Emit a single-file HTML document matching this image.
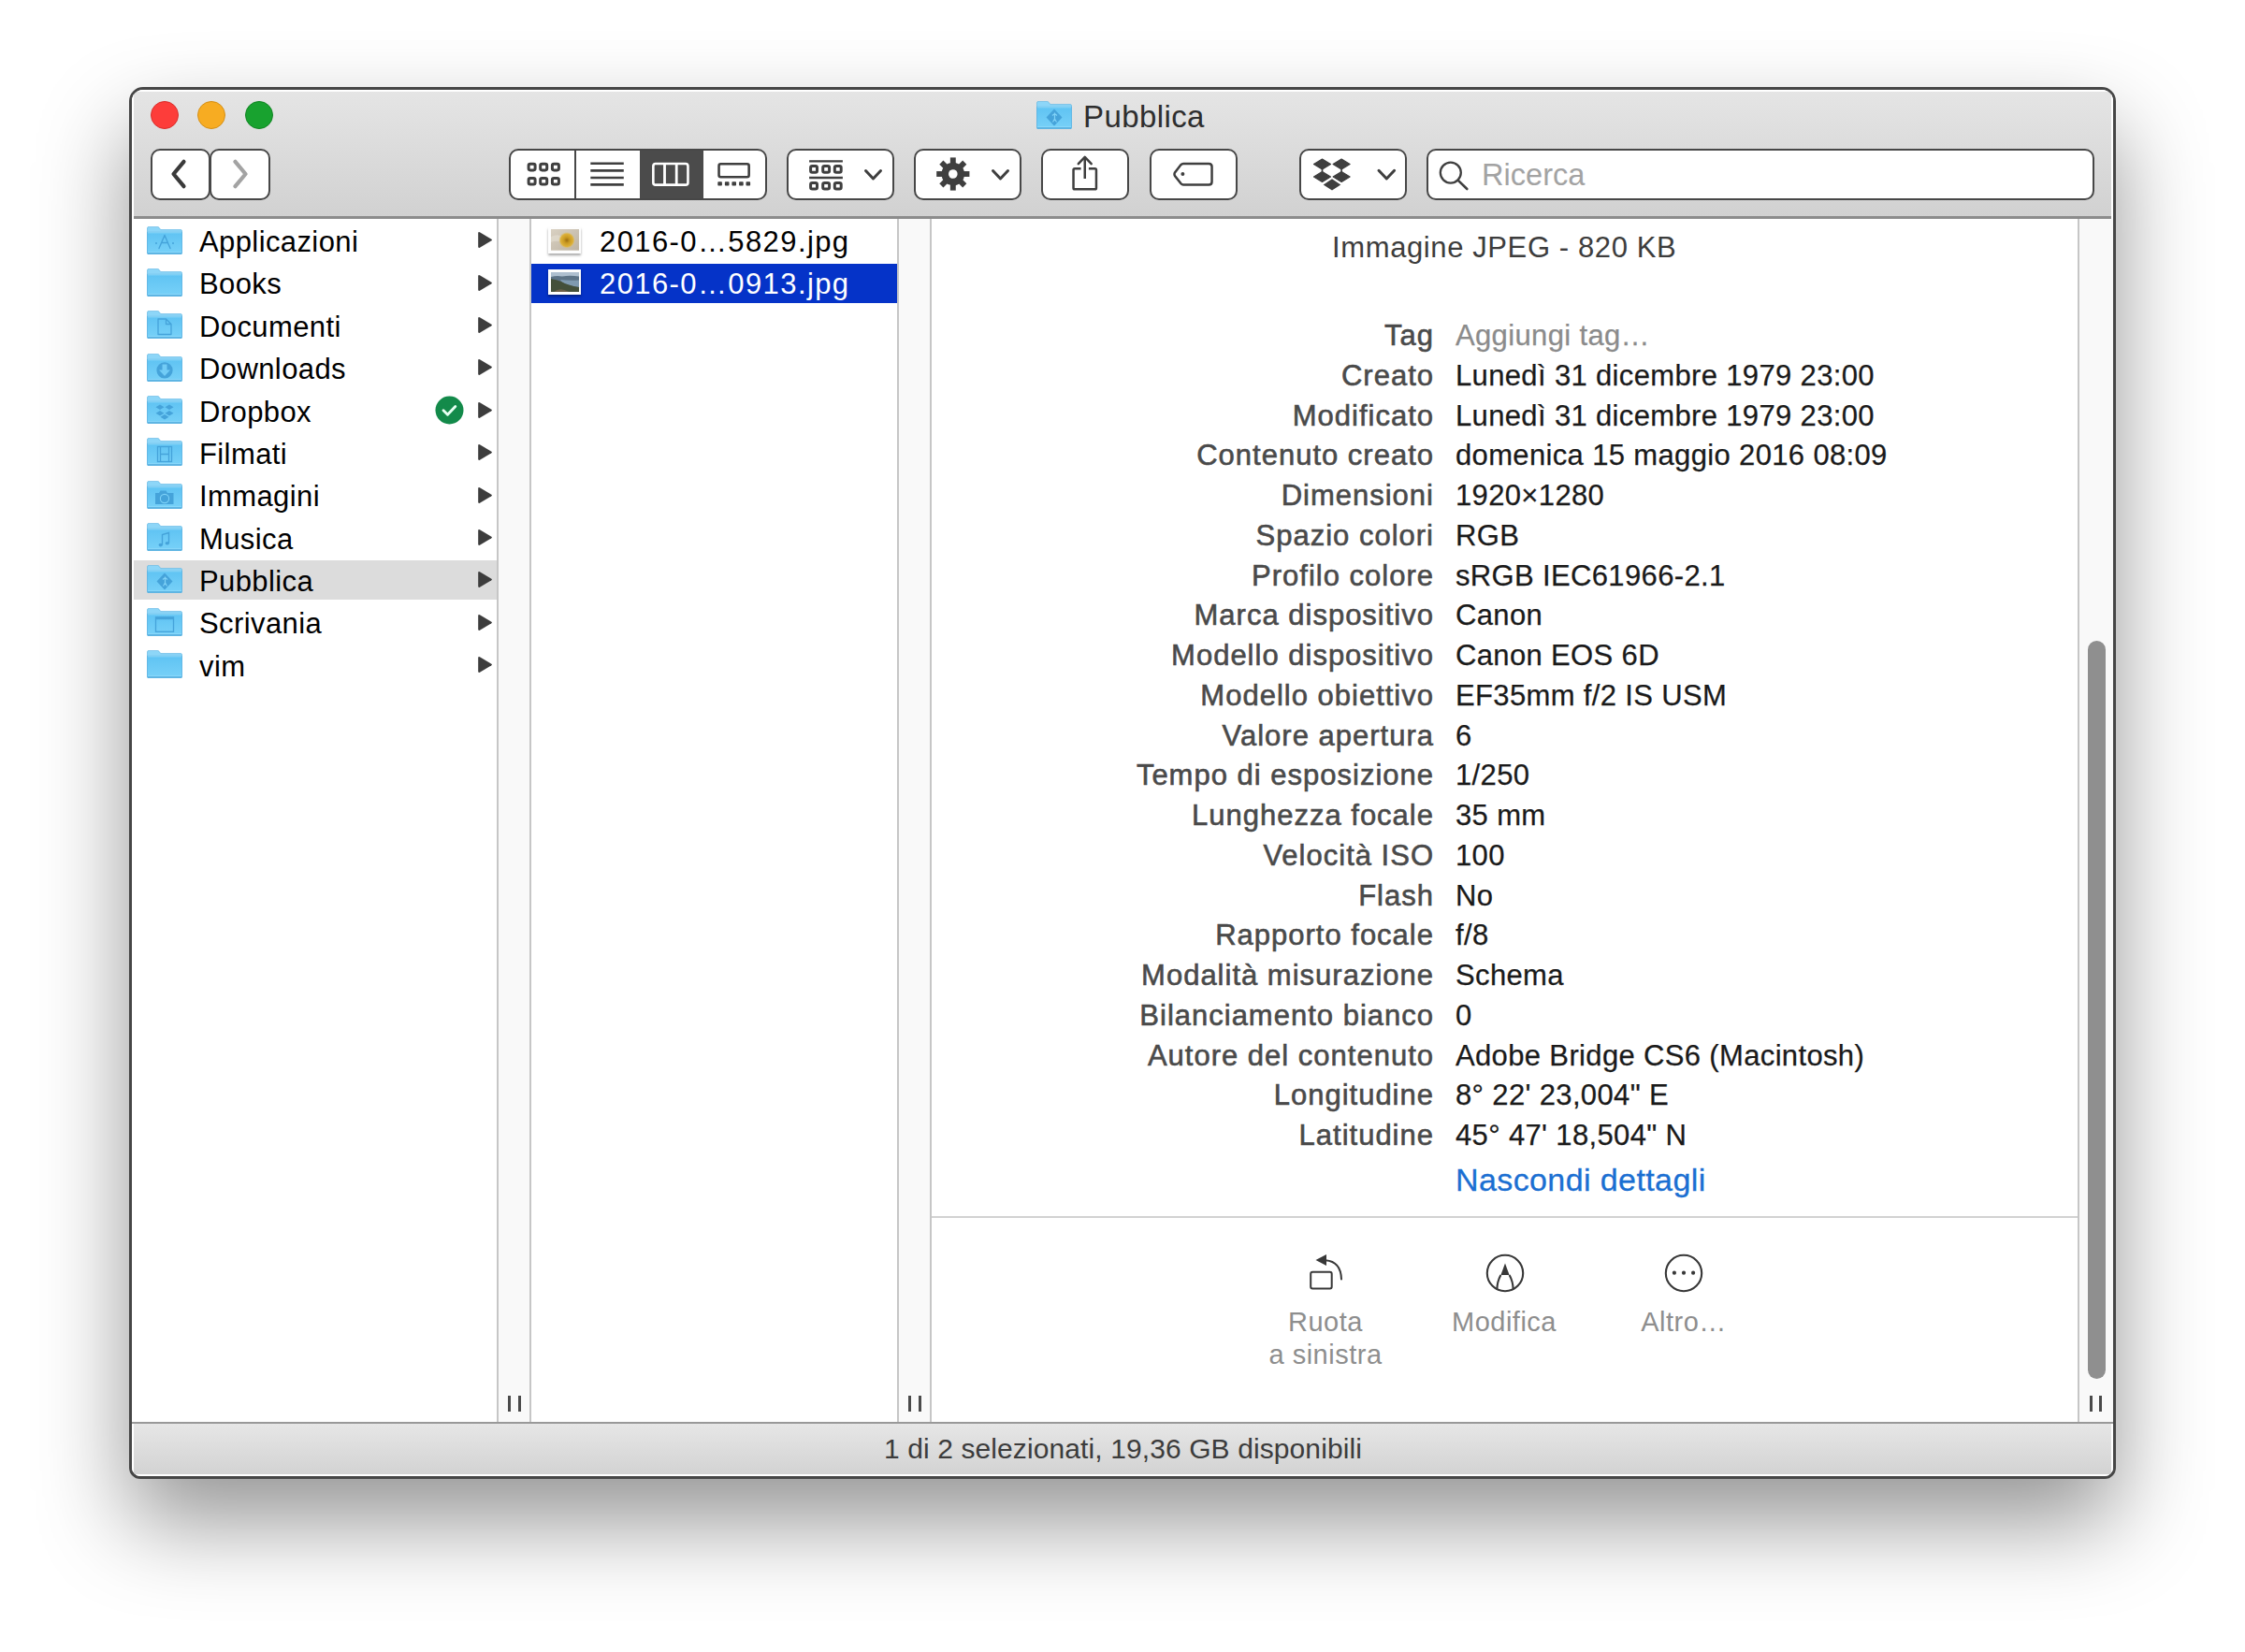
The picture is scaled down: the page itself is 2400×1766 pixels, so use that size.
<!DOCTYPE html>
<html><head><meta charset="utf-8">
<style>
html,body{margin:0;padding:0;width:2400px;height:1766px;background:#fff;overflow:hidden;font-family:"Liberation Sans",sans-serif;}
#win{position:absolute;left:138px;top:93px;width:2124px;height:1488px;box-sizing:border-box;border:3px solid #464646;border-radius:15px 15px 12px 12px;background:#fff;box-shadow:0 46px 96px rgba(0,0,0,.42);overflow:hidden}
#pg{position:absolute;left:-141px;top:-96px;width:2400px;height:1766px}
.a{position:absolute}
.t{position:absolute;white-space:nowrap;line-height:1}
#tb{position:absolute;left:141px;top:96px;width:2118px;height:136px;background:linear-gradient(#e5e5e5,#d1d1d1);box-shadow:inset 2px 2px 0 #fff,inset -2px 0 0 #fff}
#tbline{position:absolute;left:143px;top:231px;width:2114px;height:3px;background:#8c8c8c}
.btn{position:absolute;top:159px;height:55px;box-sizing:border-box;border:2.5px solid #474747;border-radius:10px;background:#fff}
.light{position:absolute;top:108px;width:30px;height:30px;border-radius:50%;box-sizing:border-box}
.strip{position:absolute;top:234px;height:1286px;background:#f9f9f9;box-sizing:border-box;border-left:2px solid #c6c6c6;border-right:2px solid #c6c6c6}
.handle{position:absolute;top:1492px;width:3px;height:17px;background:#4a4a4a}
#sb{position:absolute;left:141px;top:1520px;width:2118px;height:58px;background:linear-gradient(#e6e6e6,#d2d2d2);border-top:2px solid #999;box-sizing:border-box;box-shadow:inset 2px 0 0 #fff,inset -2px 0 0 #fff,inset 0 -2px 0 #fff}
</style></head><body>
<div id="win"><div id="pg">
<div id="tb"></div><div id="tbline"></div>
<div class="light" style="left:161px;background:#fd3d3a;border:1.5px solid #d8302d"></div>
<div class="light" style="left:211px;background:#f7ac22;border:1.5px solid #d48f17"></div>
<div class="light" style="left:262px;background:#18a22f;border:1.5px solid #128524"></div>
<svg class="a" style="left:1108px;top:108px" width="38" height="30" viewBox="0 0 38 30"><defs><linearGradient id="fg1108_108" x1="0" y1="0" x2="0" y2="1"><stop offset="0" stop-color="#5fc3f3"/><stop offset="1" stop-color="#78d1f8"/></linearGradient></defs><path d="M0.5 2 Q0.5 0.4 2.1 0.4 H11.2 Q12.3 0.4 13 1.3 L14.8 3.6 H36.2 Q37.5 3.6 37.5 4.9 V28.3 Q37.5 29.7 36.1 29.7 H1.9 Q0.5 29.7 0.5 28.3 Z" fill="#8dd6f8" stroke="#64b8e4" stroke-width="0.7"/><path d="M0.5 6.3 H37.5 V28.3 Q37.5 29.7 36.1 29.7 H1.9 Q0.5 29.7 0.5 28.3 Z" fill="url(#fg1108_108)" stroke="#5cb2e1" stroke-width="0.7"/><path d="M1 6.8 H37" stroke="#93dbfa" stroke-width="0.9"/><path d="M1 27.6 H37" stroke="#8ad8fa" stroke-width="1"/><path d="M0.9 28.9 H37.1" stroke="#56abdc" stroke-width="1.2"/><path d="M19 8.5 L27.5 17.5 L19 26.5 L10.5 17.5 Z" fill="#45a3da"/><path d="M19.5 12.5 V19 M17 15.5 L19.5 13.5 L22 15.5 M19.5 19 L17.5 22.5 M19.5 19 L21.5 22.5" stroke="#7fd2f7" stroke-width="1.2" fill="none"/></svg>
<div class="t" style="left:1158.0px;top:108.1px;font-size:33px;color:#2e2e2e;letter-spacing:0.4px;">Pubblica</div>
<div class="btn" style="left:161px;width:64px"></div>
<div class="btn" style="left:224px;width:65px"></div>
<svg class="a" style="left:180px;top:168px;" width="24" height="36" viewBox="0 0 24 36"><path d="M16.5 4.8 L5.5 18 L16.5 31.2" fill="none" stroke="#3a3a3a" stroke-width="4.2" stroke-linecap="round" stroke-linejoin="round"/></svg>
<svg class="a" style="left:246px;top:168px;" width="24" height="36" viewBox="0 0 24 36"><path d="M5.5 4.8 L16.5 18 L5.5 31.2" fill="none" stroke="#a3a3a3" stroke-width="4.2" stroke-linecap="round" stroke-linejoin="round"/></svg>
<div class="btn" style="left:544px;width:276px"></div>
<div class="a" style="left:684px;top:161px;width:68px;height:51px;background:#4b4b4b"></div>
<div class="a" style="left:614px;top:161px;width:2px;height:51px;background:#474747"></div>
<div class="btn" style="left:841px;width:115px"></div>
<div class="btn" style="left:977px;width:115px"></div>
<div class="btn" style="left:1113px;width:94px"></div>
<div class="btn" style="left:1229px;width:94px"></div>
<div class="btn" style="left:1389px;width:115px"></div>
<div class="btn" style="left:1525px;width:714px"></div>
<svg class="a" style="left:0;top:0" width="2400" height="240" viewBox="0 0 2400 240"><rect x="565.1" y="175.2" width="7" height="6.7" rx="1.8" fill="none" stroke="#3f3f3f" stroke-width="3"/><rect x="565.1" y="190.4" width="7" height="6.7" rx="1.8" fill="none" stroke="#3f3f3f" stroke-width="3"/><rect x="577.7" y="175.2" width="7" height="6.7" rx="1.8" fill="none" stroke="#3f3f3f" stroke-width="3"/><rect x="577.7" y="190.4" width="7" height="6.7" rx="1.8" fill="none" stroke="#3f3f3f" stroke-width="3"/><rect x="590.4" y="175.2" width="7" height="6.7" rx="1.8" fill="none" stroke="#3f3f3f" stroke-width="3"/><rect x="590.4" y="190.4" width="7" height="6.7" rx="1.8" fill="none" stroke="#3f3f3f" stroke-width="3"/><path d="M631.3 174.75 H666.8" stroke="#3f3f3f" stroke-width="2.6"/><path d="M631.3 182.35 H666.8" stroke="#3f3f3f" stroke-width="2.6"/><path d="M631.3 190.0 H666.8" stroke="#3f3f3f" stroke-width="2.6"/><path d="M631.3 197.35 H666.8" stroke="#3f3f3f" stroke-width="2.6"/><rect x="698.35" y="174.95" width="37.1" height="22.7" rx="2.5" fill="none" stroke="#fff" stroke-width="2.6"/><path d="M710.5 175 V198 M723.2 175 V198" stroke="#fff" stroke-width="2.8"/><rect x="768.55" y="175.25" width="32.1" height="14" rx="2" fill="none" stroke="#3f3f3f" stroke-width="2.6"/><rect x="767.3" y="194.2" width="4.6" height="4.4" rx="0.8" fill="#3f3f3f"/><rect x="774.9" y="194.2" width="4.6" height="4.4" rx="0.8" fill="#3f3f3f"/><rect x="782.4" y="194.2" width="4.6" height="4.4" rx="0.8" fill="#3f3f3f"/><rect x="790.1" y="194.2" width="4.6" height="4.4" rx="0.8" fill="#3f3f3f"/><rect x="797.5" y="194.2" width="4.6" height="4.4" rx="0.8" fill="#3f3f3f"/><path d="M865.1 172.4 H900.9 M865.1 190 H900.9" stroke="#3f3f3f" stroke-width="2.4"/><rect x="866.6" y="177.6" width="6.9" height="6.6" rx="1.8" fill="none" stroke="#3f3f3f" stroke-width="3"/><rect x="866.6" y="195.5" width="6.9" height="6.6" rx="1.8" fill="none" stroke="#3f3f3f" stroke-width="3"/><rect x="879.7" y="177.6" width="6.9" height="6.6" rx="1.8" fill="none" stroke="#3f3f3f" stroke-width="3"/><rect x="879.7" y="195.5" width="6.9" height="6.6" rx="1.8" fill="none" stroke="#3f3f3f" stroke-width="3"/><rect x="892.3" y="177.6" width="6.9" height="6.6" rx="1.8" fill="none" stroke="#3f3f3f" stroke-width="3"/><rect x="892.3" y="195.5" width="6.9" height="6.6" rx="1.8" fill="none" stroke="#3f3f3f" stroke-width="3"/><path d="M925.5 182.5 L933.5 191 L941.5 182.5" fill="none" stroke="#3f3f3f" stroke-width="3" stroke-linecap="round" stroke-linejoin="round"/></svg>
<svg class="a" style="left:0;top:0" width="2400" height="240" viewBox="0 0 2400 240"><g fill="#3f3f3f"><rect x="1015.8499999999999" y="168.4" width="5.9" height="35.2" transform="rotate(0 1018.8 186.0)"/><rect x="1015.8499999999999" y="168.4" width="5.9" height="35.2" transform="rotate(45 1018.8 186.0)"/><rect x="1015.8499999999999" y="168.4" width="5.9" height="35.2" transform="rotate(90 1018.8 186.0)"/><rect x="1015.8499999999999" y="168.4" width="5.9" height="35.2" transform="rotate(135 1018.8 186.0)"/><circle cx="1018.8" cy="186.0" r="12.3"/></g><circle cx="1018.8" cy="186.0" r="4.8" fill="#fff"/><path d="M1061.5 182.5 L1069.5 191 L1077.5 182.5" fill="none" stroke="#3f3f3f" stroke-width="3" stroke-linecap="round" stroke-linejoin="round"/><path d="M1155.6 180.35 H1149 Q1147.55 180.35 1147.55 181.8 V200.9 Q1147.55 202.35 1149 202.35 H1170.5 Q1171.95 202.35 1171.95 200.9 V181.8 Q1171.95 180.35 1170.5 180.35 H1163.9" fill="none" stroke="#3f3f3f" stroke-width="2.5"/><path d="M1159.75 168.5 V190.9" stroke="#3f3f3f" stroke-width="2.5"/><path d="M1152.8 175.2 L1159.75 167.8 L1166.7 175.2" fill="none" stroke="#3f3f3f" stroke-width="2.5" stroke-linecap="round" stroke-linejoin="round"/><path d="M1265 174.95 H1292.3 Q1295.55 174.95 1295.55 178.2 V194.2 Q1295.55 197.45 1292.3 197.45 H1265 Q1263.5 197.45 1262.5 196.3 L1256 188 Q1255 186.2 1256 184.4 L1262.5 176.1 Q1263.5 174.95 1265 174.95 Z" fill="none" stroke="#3f3f3f" stroke-width="2.5"/><circle cx="1264.4" cy="186" r="2" fill="#3f3f3f"/><path d="M1413.5 170.1 L1422.5 175.6 L1413.5 181.1 L1404.5 175.6 Z M1434.1 170.1 L1443.1 175.6 L1434.1 181.1 L1425.1 175.6 Z M1413.5 183.5 L1422.5 189.0 L1413.5 194.5 L1404.5 189.0 Z M1434.1 183.5 L1443.1 189.0 L1434.1 194.5 L1425.1 189.0 Z " fill="#3f3f3f" stroke="#3f3f3f" stroke-width="1.2" stroke-linejoin="round"/><rect x="1412.7" y="180" width="1.6" height="4" fill="#3f3f3f"/><rect x="1433.3" y="180" width="1.6" height="4" fill="#3f3f3f"/><path d="M1424 191.3 L1433.3 197.4 L1424 203.5 L1414.7 197.4 Z " fill="#3f3f3f" stroke="#fff" stroke-width="3.6" paint-order="stroke" stroke-linejoin="round"/><path d="M1474 182.3 L1482.3 191 L1490.6 182.3" fill="none" stroke="#3f3f3f" stroke-width="3" stroke-linecap="round" stroke-linejoin="round"/><circle cx="1550.8" cy="184.6" r="11" fill="none" stroke="#3f3f3f" stroke-width="2.3"/><path d="M1558.6 192.6 L1568.3 202" stroke="#3f3f3f" stroke-width="2.6" stroke-linecap="round"/></svg>
<div class="t" style="left:1584.0px;top:171.2px;font-size:32.6px;color:#a3a3a3;letter-spacing:0px;">Ricerca</div>
<div class="strip" style="left:531px;width:37px"></div>
<div class="strip" style="left:959px;width:37px"></div>
<div class="strip" style="left:2221px;width:38px;border-right:none"></div>
<div class="handle" style="left:543px"></div><div class="handle" style="left:554px"></div><div class="handle" style="left:971px"></div><div class="handle" style="left:982px"></div><div class="handle" style="left:2234px"></div><div class="handle" style="left:2244px"></div>
<div class="a" style="left:2232px;top:685px;width:19px;height:789px;border-radius:10px;background:#8f8f8f"></div>
<div class="a" style="left:143px;top:599px;width:388px;height:42px;background:#dcdcdc"></div>
<svg class="a" style="left:157px;top:242px" width="38" height="30" viewBox="0 0 38 30"><defs><linearGradient id="fg157_242" x1="0" y1="0" x2="0" y2="1"><stop offset="0" stop-color="#5fc3f3"/><stop offset="1" stop-color="#78d1f8"/></linearGradient></defs><path d="M0.5 2 Q0.5 0.4 2.1 0.4 H11.2 Q12.3 0.4 13 1.3 L14.8 3.6 H36.2 Q37.5 3.6 37.5 4.9 V28.3 Q37.5 29.7 36.1 29.7 H1.9 Q0.5 29.7 0.5 28.3 Z" fill="#8dd6f8" stroke="#64b8e4" stroke-width="0.7"/><path d="M0.5 6.3 H37.5 V28.3 Q37.5 29.7 36.1 29.7 H1.9 Q0.5 29.7 0.5 28.3 Z" fill="url(#fg157_242)" stroke="#5cb2e1" stroke-width="0.7"/><path d="M1 6.8 H37" stroke="#93dbfa" stroke-width="0.9"/><path d="M1 27.6 H37" stroke="#8ad8fa" stroke-width="1"/><path d="M0.9 28.9 H37.1" stroke="#56abdc" stroke-width="1.2"/><g fill="none" stroke="#45a3da" stroke-width="1.4" stroke-linecap="round"><path d="M19 9.5 L13 23.5 M19 9.5 L25 23.5 M15.5 17.5 H22.5"/></g><circle cx="10" cy="18" r="1" fill="#45a3da"/><circle cx="28" cy="18" r="1" fill="#45a3da"/></svg>
<div class="t" style="left:213.0px;top:243.1px;font-size:31px;color:#000;letter-spacing:0.4px;">Applicazioni</div>
<svg class="a" style="left:510px;top:247.3px" width="17" height="19" viewBox="0 0 17 19"><path d="M2.9 1.3 Q1.2 0.4 1.2 2.4 V16.6 Q1.2 18.6 2.9 17.7 L15.4 10.3 Q16.6 9.5 15.4 8.7 Z" fill="#3d3d3d"/></svg>
<svg class="a" style="left:157px;top:287px" width="38" height="30" viewBox="0 0 38 30"><defs><linearGradient id="fg157_287" x1="0" y1="0" x2="0" y2="1"><stop offset="0" stop-color="#5fc3f3"/><stop offset="1" stop-color="#78d1f8"/></linearGradient></defs><path d="M0.5 2 Q0.5 0.4 2.1 0.4 H11.2 Q12.3 0.4 13 1.3 L14.8 3.6 H36.2 Q37.5 3.6 37.5 4.9 V28.3 Q37.5 29.7 36.1 29.7 H1.9 Q0.5 29.7 0.5 28.3 Z" fill="#8dd6f8" stroke="#64b8e4" stroke-width="0.7"/><path d="M0.5 6.3 H37.5 V28.3 Q37.5 29.7 36.1 29.7 H1.9 Q0.5 29.7 0.5 28.3 Z" fill="url(#fg157_287)" stroke="#5cb2e1" stroke-width="0.7"/><path d="M1 6.8 H37" stroke="#93dbfa" stroke-width="0.9"/><path d="M1 27.6 H37" stroke="#8ad8fa" stroke-width="1"/><path d="M0.9 28.9 H37.1" stroke="#56abdc" stroke-width="1.2"/></svg>
<div class="t" style="left:213.0px;top:288.4px;font-size:31px;color:#000;letter-spacing:0.4px;">Books</div>
<svg class="a" style="left:510px;top:292.7px" width="17" height="19" viewBox="0 0 17 19"><path d="M2.9 1.3 Q1.2 0.4 1.2 2.4 V16.6 Q1.2 18.6 2.9 17.7 L15.4 10.3 Q16.6 9.5 15.4 8.7 Z" fill="#3d3d3d"/></svg>
<svg class="a" style="left:157px;top:332px" width="38" height="30" viewBox="0 0 38 30"><defs><linearGradient id="fg157_332" x1="0" y1="0" x2="0" y2="1"><stop offset="0" stop-color="#5fc3f3"/><stop offset="1" stop-color="#78d1f8"/></linearGradient></defs><path d="M0.5 2 Q0.5 0.4 2.1 0.4 H11.2 Q12.3 0.4 13 1.3 L14.8 3.6 H36.2 Q37.5 3.6 37.5 4.9 V28.3 Q37.5 29.7 36.1 29.7 H1.9 Q0.5 29.7 0.5 28.3 Z" fill="#8dd6f8" stroke="#64b8e4" stroke-width="0.7"/><path d="M0.5 6.3 H37.5 V28.3 Q37.5 29.7 36.1 29.7 H1.9 Q0.5 29.7 0.5 28.3 Z" fill="url(#fg157_332)" stroke="#5cb2e1" stroke-width="0.7"/><path d="M1 6.8 H37" stroke="#93dbfa" stroke-width="0.9"/><path d="M1 27.6 H37" stroke="#8ad8fa" stroke-width="1"/><path d="M0.9 28.9 H37.1" stroke="#56abdc" stroke-width="1.2"/><path d="M12 9 H20.5 L26 14.5 V25.5 H12 Z M20.5 9 V14.5 H26" fill="none" stroke="#45a3da" stroke-width="1.3" stroke-linejoin="round"/></svg>
<div class="t" style="left:213.0px;top:333.8px;font-size:31px;color:#000;letter-spacing:0.4px;">Documenti</div>
<svg class="a" style="left:510px;top:338.0px" width="17" height="19" viewBox="0 0 17 19"><path d="M2.9 1.3 Q1.2 0.4 1.2 2.4 V16.6 Q1.2 18.6 2.9 17.7 L15.4 10.3 Q16.6 9.5 15.4 8.7 Z" fill="#3d3d3d"/></svg>
<svg class="a" style="left:157px;top:378px" width="38" height="30" viewBox="0 0 38 30"><defs><linearGradient id="fg157_378" x1="0" y1="0" x2="0" y2="1"><stop offset="0" stop-color="#5fc3f3"/><stop offset="1" stop-color="#78d1f8"/></linearGradient></defs><path d="M0.5 2 Q0.5 0.4 2.1 0.4 H11.2 Q12.3 0.4 13 1.3 L14.8 3.6 H36.2 Q37.5 3.6 37.5 4.9 V28.3 Q37.5 29.7 36.1 29.7 H1.9 Q0.5 29.7 0.5 28.3 Z" fill="#8dd6f8" stroke="#64b8e4" stroke-width="0.7"/><path d="M0.5 6.3 H37.5 V28.3 Q37.5 29.7 36.1 29.7 H1.9 Q0.5 29.7 0.5 28.3 Z" fill="url(#fg157_378)" stroke="#5cb2e1" stroke-width="0.7"/><path d="M1 6.8 H37" stroke="#93dbfa" stroke-width="0.9"/><path d="M1 27.6 H37" stroke="#8ad8fa" stroke-width="1"/><path d="M0.9 28.9 H37.1" stroke="#56abdc" stroke-width="1.2"/><circle cx="19" cy="17.8" r="8.6" fill="#45a3da"/><path d="M16.5 11.5 H21.5 V17.5 H25 L19 24 L13 17.5 H16.5 Z" fill="#72ccf6"/></svg>
<div class="t" style="left:213.0px;top:379.1px;font-size:31px;color:#000;letter-spacing:0.4px;">Downloads</div>
<svg class="a" style="left:510px;top:383.4px" width="17" height="19" viewBox="0 0 17 19"><path d="M2.9 1.3 Q1.2 0.4 1.2 2.4 V16.6 Q1.2 18.6 2.9 17.7 L15.4 10.3 Q16.6 9.5 15.4 8.7 Z" fill="#3d3d3d"/></svg>
<svg class="a" style="left:157px;top:423px" width="38" height="30" viewBox="0 0 38 30"><defs><linearGradient id="fg157_423" x1="0" y1="0" x2="0" y2="1"><stop offset="0" stop-color="#5fc3f3"/><stop offset="1" stop-color="#78d1f8"/></linearGradient></defs><path d="M0.5 2 Q0.5 0.4 2.1 0.4 H11.2 Q12.3 0.4 13 1.3 L14.8 3.6 H36.2 Q37.5 3.6 37.5 4.9 V28.3 Q37.5 29.7 36.1 29.7 H1.9 Q0.5 29.7 0.5 28.3 Z" fill="#8dd6f8" stroke="#64b8e4" stroke-width="0.7"/><path d="M0.5 6.3 H37.5 V28.3 Q37.5 29.7 36.1 29.7 H1.9 Q0.5 29.7 0.5 28.3 Z" fill="url(#fg157_423)" stroke="#5cb2e1" stroke-width="0.7"/><path d="M1 6.8 H37" stroke="#93dbfa" stroke-width="0.9"/><path d="M1 27.6 H37" stroke="#8ad8fa" stroke-width="1"/><path d="M0.9 28.9 H37.1" stroke="#56abdc" stroke-width="1.2"/><g fill="#45a3da"><path d="M14 9.5 L18.5 12.3 L14 15.1 L9.5 12.3 Z M24 9.5 L28.5 12.3 L24 15.1 L19.5 12.3 Z M14 15.9 L18.5 18.7 L14 21.5 L9.5 18.7 Z M24 15.9 L28.5 18.7 L24 21.5 L19.5 18.7 Z M19 20 L23.5 22.8 L19 25.6 L14.5 22.8 Z"/></g></svg>
<div class="t" style="left:213.0px;top:424.5px;font-size:31px;color:#000;letter-spacing:0.4px;">Dropbox</div>
<svg class="a" style="left:510px;top:428.7px" width="17" height="19" viewBox="0 0 17 19"><path d="M2.9 1.3 Q1.2 0.4 1.2 2.4 V16.6 Q1.2 18.6 2.9 17.7 L15.4 10.3 Q16.6 9.5 15.4 8.7 Z" fill="#3d3d3d"/></svg>
<svg class="a" style="left:157px;top:468px" width="38" height="30" viewBox="0 0 38 30"><defs><linearGradient id="fg157_468" x1="0" y1="0" x2="0" y2="1"><stop offset="0" stop-color="#5fc3f3"/><stop offset="1" stop-color="#78d1f8"/></linearGradient></defs><path d="M0.5 2 Q0.5 0.4 2.1 0.4 H11.2 Q12.3 0.4 13 1.3 L14.8 3.6 H36.2 Q37.5 3.6 37.5 4.9 V28.3 Q37.5 29.7 36.1 29.7 H1.9 Q0.5 29.7 0.5 28.3 Z" fill="#8dd6f8" stroke="#64b8e4" stroke-width="0.7"/><path d="M0.5 6.3 H37.5 V28.3 Q37.5 29.7 36.1 29.7 H1.9 Q0.5 29.7 0.5 28.3 Z" fill="url(#fg157_468)" stroke="#5cb2e1" stroke-width="0.7"/><path d="M1 6.8 H37" stroke="#93dbfa" stroke-width="0.9"/><path d="M1 27.6 H37" stroke="#8ad8fa" stroke-width="1"/><path d="M0.9 28.9 H37.1" stroke="#56abdc" stroke-width="1.2"/><g fill="none" stroke="#45a3da" stroke-width="1.3"><rect x="11.5" y="9.5" width="15" height="16"/><path d="M14.5 9.5 V25.5 M23.5 9.5 V25.5 M14.5 17.5 H23.5"/></g></svg>
<div class="t" style="left:213.0px;top:469.9px;font-size:31px;color:#000;letter-spacing:0.4px;">Filmati</div>
<svg class="a" style="left:510px;top:474.1px" width="17" height="19" viewBox="0 0 17 19"><path d="M2.9 1.3 Q1.2 0.4 1.2 2.4 V16.6 Q1.2 18.6 2.9 17.7 L15.4 10.3 Q16.6 9.5 15.4 8.7 Z" fill="#3d3d3d"/></svg>
<svg class="a" style="left:157px;top:514px" width="38" height="30" viewBox="0 0 38 30"><defs><linearGradient id="fg157_514" x1="0" y1="0" x2="0" y2="1"><stop offset="0" stop-color="#5fc3f3"/><stop offset="1" stop-color="#78d1f8"/></linearGradient></defs><path d="M0.5 2 Q0.5 0.4 2.1 0.4 H11.2 Q12.3 0.4 13 1.3 L14.8 3.6 H36.2 Q37.5 3.6 37.5 4.9 V28.3 Q37.5 29.7 36.1 29.7 H1.9 Q0.5 29.7 0.5 28.3 Z" fill="#8dd6f8" stroke="#64b8e4" stroke-width="0.7"/><path d="M0.5 6.3 H37.5 V28.3 Q37.5 29.7 36.1 29.7 H1.9 Q0.5 29.7 0.5 28.3 Z" fill="url(#fg157_514)" stroke="#5cb2e1" stroke-width="0.7"/><path d="M1 6.8 H37" stroke="#93dbfa" stroke-width="0.9"/><path d="M1 27.6 H37" stroke="#8ad8fa" stroke-width="1"/><path d="M0.9 28.9 H37.1" stroke="#56abdc" stroke-width="1.2"/><path d="M9 13 H13 L14.5 10.5 H20.5 L22 13 H28.5 V25 H9 Z" fill="#45a3da"/><circle cx="19" cy="19" r="4.6" fill="none" stroke="#7dd2f8" stroke-width="1.1"/></svg>
<div class="t" style="left:213.0px;top:515.2px;font-size:31px;color:#000;letter-spacing:0.4px;">Immagini</div>
<svg class="a" style="left:510px;top:519.5px" width="17" height="19" viewBox="0 0 17 19"><path d="M2.9 1.3 Q1.2 0.4 1.2 2.4 V16.6 Q1.2 18.6 2.9 17.7 L15.4 10.3 Q16.6 9.5 15.4 8.7 Z" fill="#3d3d3d"/></svg>
<svg class="a" style="left:157px;top:559px" width="38" height="30" viewBox="0 0 38 30"><defs><linearGradient id="fg157_559" x1="0" y1="0" x2="0" y2="1"><stop offset="0" stop-color="#5fc3f3"/><stop offset="1" stop-color="#78d1f8"/></linearGradient></defs><path d="M0.5 2 Q0.5 0.4 2.1 0.4 H11.2 Q12.3 0.4 13 1.3 L14.8 3.6 H36.2 Q37.5 3.6 37.5 4.9 V28.3 Q37.5 29.7 36.1 29.7 H1.9 Q0.5 29.7 0.5 28.3 Z" fill="#8dd6f8" stroke="#64b8e4" stroke-width="0.7"/><path d="M0.5 6.3 H37.5 V28.3 Q37.5 29.7 36.1 29.7 H1.9 Q0.5 29.7 0.5 28.3 Z" fill="url(#fg157_559)" stroke="#5cb2e1" stroke-width="0.7"/><path d="M1 6.8 H37" stroke="#93dbfa" stroke-width="0.9"/><path d="M1 27.6 H37" stroke="#8ad8fa" stroke-width="1"/><path d="M0.9 28.9 H37.1" stroke="#56abdc" stroke-width="1.2"/><path d="M16.5 23.5 V12.5 L23.5 10.5 V21.5" fill="none" stroke="#45a3da" stroke-width="1.4"/><ellipse cx="14.8" cy="23.6" rx="2.2" ry="1.8" fill="#45a3da"/><ellipse cx="21.8" cy="21.8" rx="2.2" ry="1.8" fill="#45a3da"/></svg>
<div class="t" style="left:213.0px;top:560.6px;font-size:31px;color:#000;letter-spacing:0.4px;">Musica</div>
<svg class="a" style="left:510px;top:564.8px" width="17" height="19" viewBox="0 0 17 19"><path d="M2.9 1.3 Q1.2 0.4 1.2 2.4 V16.6 Q1.2 18.6 2.9 17.7 L15.4 10.3 Q16.6 9.5 15.4 8.7 Z" fill="#3d3d3d"/></svg>
<svg class="a" style="left:157px;top:604px" width="38" height="30" viewBox="0 0 38 30"><defs><linearGradient id="fg157_604" x1="0" y1="0" x2="0" y2="1"><stop offset="0" stop-color="#5fc3f3"/><stop offset="1" stop-color="#78d1f8"/></linearGradient></defs><path d="M0.5 2 Q0.5 0.4 2.1 0.4 H11.2 Q12.3 0.4 13 1.3 L14.8 3.6 H36.2 Q37.5 3.6 37.5 4.9 V28.3 Q37.5 29.7 36.1 29.7 H1.9 Q0.5 29.7 0.5 28.3 Z" fill="#8dd6f8" stroke="#64b8e4" stroke-width="0.7"/><path d="M0.5 6.3 H37.5 V28.3 Q37.5 29.7 36.1 29.7 H1.9 Q0.5 29.7 0.5 28.3 Z" fill="url(#fg157_604)" stroke="#5cb2e1" stroke-width="0.7"/><path d="M1 6.8 H37" stroke="#93dbfa" stroke-width="0.9"/><path d="M1 27.6 H37" stroke="#8ad8fa" stroke-width="1"/><path d="M0.9 28.9 H37.1" stroke="#56abdc" stroke-width="1.2"/><path d="M19 8.5 L27.5 17.5 L19 26.5 L10.5 17.5 Z" fill="#45a3da"/><path d="M19.5 12.5 V19 M17 15.5 L19.5 13.5 L22 15.5 M19.5 19 L17.5 22.5 M19.5 19 L21.5 22.5" stroke="#7fd2f7" stroke-width="1.2" fill="none"/></svg>
<div class="t" style="left:213.0px;top:605.9px;font-size:31px;color:#000;letter-spacing:0.4px;">Pubblica</div>
<svg class="a" style="left:510px;top:610.2px" width="17" height="19" viewBox="0 0 17 19"><path d="M2.9 1.3 Q1.2 0.4 1.2 2.4 V16.6 Q1.2 18.6 2.9 17.7 L15.4 10.3 Q16.6 9.5 15.4 8.7 Z" fill="#3d3d3d"/></svg>
<svg class="a" style="left:157px;top:650px" width="38" height="30" viewBox="0 0 38 30"><defs><linearGradient id="fg157_650" x1="0" y1="0" x2="0" y2="1"><stop offset="0" stop-color="#5fc3f3"/><stop offset="1" stop-color="#78d1f8"/></linearGradient></defs><path d="M0.5 2 Q0.5 0.4 2.1 0.4 H11.2 Q12.3 0.4 13 1.3 L14.8 3.6 H36.2 Q37.5 3.6 37.5 4.9 V28.3 Q37.5 29.7 36.1 29.7 H1.9 Q0.5 29.7 0.5 28.3 Z" fill="#8dd6f8" stroke="#64b8e4" stroke-width="0.7"/><path d="M0.5 6.3 H37.5 V28.3 Q37.5 29.7 36.1 29.7 H1.9 Q0.5 29.7 0.5 28.3 Z" fill="url(#fg157_650)" stroke="#5cb2e1" stroke-width="0.7"/><path d="M1 6.8 H37" stroke="#93dbfa" stroke-width="0.9"/><path d="M1 27.6 H37" stroke="#8ad8fa" stroke-width="1"/><path d="M0.9 28.9 H37.1" stroke="#56abdc" stroke-width="1.2"/><rect x="9.5" y="9.8" width="19" height="15.5" fill="none" stroke="#45a3da" stroke-width="1.3"/><rect x="9.5" y="9.8" width="19" height="2.4" fill="#45a3da"/></svg>
<div class="t" style="left:213.0px;top:651.3px;font-size:31px;color:#000;letter-spacing:0.4px;">Scrivania</div>
<svg class="a" style="left:510px;top:655.5px" width="17" height="19" viewBox="0 0 17 19"><path d="M2.9 1.3 Q1.2 0.4 1.2 2.4 V16.6 Q1.2 18.6 2.9 17.7 L15.4 10.3 Q16.6 9.5 15.4 8.7 Z" fill="#3d3d3d"/></svg>
<svg class="a" style="left:157px;top:695px" width="38" height="30" viewBox="0 0 38 30"><defs><linearGradient id="fg157_695" x1="0" y1="0" x2="0" y2="1"><stop offset="0" stop-color="#5fc3f3"/><stop offset="1" stop-color="#78d1f8"/></linearGradient></defs><path d="M0.5 2 Q0.5 0.4 2.1 0.4 H11.2 Q12.3 0.4 13 1.3 L14.8 3.6 H36.2 Q37.5 3.6 37.5 4.9 V28.3 Q37.5 29.7 36.1 29.7 H1.9 Q0.5 29.7 0.5 28.3 Z" fill="#8dd6f8" stroke="#64b8e4" stroke-width="0.7"/><path d="M0.5 6.3 H37.5 V28.3 Q37.5 29.7 36.1 29.7 H1.9 Q0.5 29.7 0.5 28.3 Z" fill="url(#fg157_695)" stroke="#5cb2e1" stroke-width="0.7"/><path d="M1 6.8 H37" stroke="#93dbfa" stroke-width="0.9"/><path d="M1 27.6 H37" stroke="#8ad8fa" stroke-width="1"/><path d="M0.9 28.9 H37.1" stroke="#56abdc" stroke-width="1.2"/></svg>
<div class="t" style="left:213.0px;top:696.7px;font-size:31px;color:#000;letter-spacing:0.4px;">vim</div>
<svg class="a" style="left:510px;top:700.9px" width="17" height="19" viewBox="0 0 17 19"><path d="M2.9 1.3 Q1.2 0.4 1.2 2.4 V16.6 Q1.2 18.6 2.9 17.7 L15.4 10.3 Q16.6 9.5 15.4 8.7 Z" fill="#3d3d3d"/></svg>
<svg class="a" style="left:465px;top:423px;" width="31" height="31" viewBox="0 0 31 31"><circle cx="15.5" cy="15.5" r="15" fill="#138a4a"/><path d="M9 15.8 L13.5 20.2 L21.8 11.5" fill="none" stroke="#e6fff2" stroke-width="2.9" stroke-linecap="round" stroke-linejoin="round"/></svg>
<div class="a" style="left:568px;top:282px;width:391px;height:42px;background:#0533c8"></div>
<div class="a" style="left:586px;top:243px;width:35px;height:28px;background:#fdfdfd;box-shadow:0 1.5px 2.5px rgba(0,0,0,.35)"></div>
<svg class="a" style="left:589px;top:245.3px" width="30" height="22.7" viewBox="0 0 30 22.7"><defs><radialGradient id="fl" cx="0.5" cy="0.5" r="0.5"><stop offset="0" stop-color="#9c6e12"/><stop offset="0.35" stop-color="#c99a22"/><stop offset="0.75" stop-color="#ddb13a"/><stop offset="1" stop-color="#d8c48a" stop-opacity="0"/></radialGradient><linearGradient id="bg1" x1="0" y1="0" x2="1" y2="1"><stop offset="0" stop-color="#d9d1c2"/><stop offset="1" stop-color="#bdb3a3"/></linearGradient></defs><rect width="30" height="22.7" fill="url(#bg1)"/><path d="M0 8 Q8 4 14 9 L9 13 Q4 12 0 14 Z" fill="#e3ddd0" opacity=".7"/><circle cx="17" cy="11.8" r="9" fill="url(#fl)"/></svg>
<div class="a" style="left:586px;top:288px;width:35px;height:26.5px;background:#fdfdfd;box-shadow:0 1.5px 2.5px rgba(0,0,0,.35)"></div>
<svg class="a" style="left:589px;top:290.5px" width="30" height="21.3" viewBox="0 0 30 21.3"><rect width="30" height="21.3" fill="#aebfcf"/><path d="M0 5 Q6 3.5 12 4.5 Q20 3 30 4.5 V21.3 H0 Z" fill="#5d7386"/><path d="M10 8 Q18 9 30 8.5 V16 Q20 15 12 11 Z" fill="#7f9ab0"/><path d="M0 7 Q6 8 11 10 Q18 14 30 16 V21.3 H0 Z" fill="#44503a"/><path d="M3 21.3 Q9 15 20 21.3 Z" fill="#6e6048"/></svg>
<div class="t" style="left:641.0px;top:242.6px;font-size:31px;color:#000;letter-spacing:1.4px;">2016-0…5829.jpg</div>
<div class="t" style="left:641.0px;top:287.5px;font-size:31px;color:#fff;letter-spacing:1.4px;">2016-0…0913.jpg</div>
<div class="t" style="left:1108.2px;width:1000px;text-align:center;top:248.5px;font-size:31px;color:#3d3d3d;letter-spacing:0.6px;">Immagine JPEG - 820 KB</div>
<div class="t" style="right:867.0px;top:343.1px;font-size:31px;color:#4a4a4a;letter-spacing:1.0px;-webkit-text-stroke:0.6px #4a4a4a">Tag</div>
<div class="t" style="left:1556.0px;top:343.1px;font-size:31px;color:#8b8b8b;letter-spacing:0.35px;-webkit-text-stroke:0.25px currentColor">Aggiungi tag…</div>
<div class="t" style="right:867.0px;top:385.8px;font-size:31px;color:#4a4a4a;letter-spacing:1.0px;-webkit-text-stroke:0.6px #4a4a4a">Creato</div>
<div class="t" style="left:1556.0px;top:385.8px;font-size:31px;color:#1a1a1a;letter-spacing:0.35px;-webkit-text-stroke:0.25px currentColor">Lunedì 31 dicembre 1979 23:00</div>
<div class="t" style="right:867.0px;top:428.5px;font-size:31px;color:#4a4a4a;letter-spacing:1.0px;-webkit-text-stroke:0.6px #4a4a4a">Modificato</div>
<div class="t" style="left:1556.0px;top:428.5px;font-size:31px;color:#1a1a1a;letter-spacing:0.35px;-webkit-text-stroke:0.25px currentColor">Lunedì 31 dicembre 1979 23:00</div>
<div class="t" style="right:867.0px;top:471.3px;font-size:31px;color:#4a4a4a;letter-spacing:1.0px;-webkit-text-stroke:0.6px #4a4a4a">Contenuto creato</div>
<div class="t" style="left:1556.0px;top:471.3px;font-size:31px;color:#1a1a1a;letter-spacing:0.35px;-webkit-text-stroke:0.25px currentColor">domenica 15 maggio 2016 08:09</div>
<div class="t" style="right:867.0px;top:514.0px;font-size:31px;color:#4a4a4a;letter-spacing:1.0px;-webkit-text-stroke:0.6px #4a4a4a">Dimensioni</div>
<div class="t" style="left:1556.0px;top:514.0px;font-size:31px;color:#1a1a1a;letter-spacing:0.35px;-webkit-text-stroke:0.25px currentColor">1920×1280</div>
<div class="t" style="right:867.0px;top:556.8px;font-size:31px;color:#4a4a4a;letter-spacing:1.0px;-webkit-text-stroke:0.6px #4a4a4a">Spazio colori</div>
<div class="t" style="left:1556.0px;top:556.8px;font-size:31px;color:#1a1a1a;letter-spacing:0.35px;-webkit-text-stroke:0.25px currentColor">RGB</div>
<div class="t" style="right:867.0px;top:599.5px;font-size:31px;color:#4a4a4a;letter-spacing:1.0px;-webkit-text-stroke:0.6px #4a4a4a">Profilo colore</div>
<div class="t" style="left:1556.0px;top:599.5px;font-size:31px;color:#1a1a1a;letter-spacing:0.35px;-webkit-text-stroke:0.25px currentColor">sRGB IEC61966-2.1</div>
<div class="t" style="right:867.0px;top:642.3px;font-size:31px;color:#4a4a4a;letter-spacing:1.0px;-webkit-text-stroke:0.6px #4a4a4a">Marca dispositivo</div>
<div class="t" style="left:1556.0px;top:642.3px;font-size:31px;color:#1a1a1a;letter-spacing:0.35px;-webkit-text-stroke:0.25px currentColor">Canon</div>
<div class="t" style="right:867.0px;top:685.0px;font-size:31px;color:#4a4a4a;letter-spacing:1.0px;-webkit-text-stroke:0.6px #4a4a4a">Modello dispositivo</div>
<div class="t" style="left:1556.0px;top:685.0px;font-size:31px;color:#1a1a1a;letter-spacing:0.35px;-webkit-text-stroke:0.25px currentColor">Canon EOS 6D</div>
<div class="t" style="right:867.0px;top:727.8px;font-size:31px;color:#4a4a4a;letter-spacing:1.0px;-webkit-text-stroke:0.6px #4a4a4a">Modello obiettivo</div>
<div class="t" style="left:1556.0px;top:727.8px;font-size:31px;color:#1a1a1a;letter-spacing:0.35px;-webkit-text-stroke:0.25px currentColor">EF35mm f/2 IS USM</div>
<div class="t" style="right:867.0px;top:770.5px;font-size:31px;color:#4a4a4a;letter-spacing:1.0px;-webkit-text-stroke:0.6px #4a4a4a">Valore apertura</div>
<div class="t" style="left:1556.0px;top:770.5px;font-size:31px;color:#1a1a1a;letter-spacing:0.35px;-webkit-text-stroke:0.25px currentColor">6</div>
<div class="t" style="right:867.0px;top:813.3px;font-size:31px;color:#4a4a4a;letter-spacing:1.0px;-webkit-text-stroke:0.6px #4a4a4a">Tempo di esposizione</div>
<div class="t" style="left:1556.0px;top:813.3px;font-size:31px;color:#1a1a1a;letter-spacing:0.35px;-webkit-text-stroke:0.25px currentColor">1/250</div>
<div class="t" style="right:867.0px;top:856.0px;font-size:31px;color:#4a4a4a;letter-spacing:1.0px;-webkit-text-stroke:0.6px #4a4a4a">Lunghezza focale</div>
<div class="t" style="left:1556.0px;top:856.0px;font-size:31px;color:#1a1a1a;letter-spacing:0.35px;-webkit-text-stroke:0.25px currentColor">35 mm</div>
<div class="t" style="right:867.0px;top:898.7px;font-size:31px;color:#4a4a4a;letter-spacing:1.0px;-webkit-text-stroke:0.6px #4a4a4a">Velocità ISO</div>
<div class="t" style="left:1556.0px;top:898.7px;font-size:31px;color:#1a1a1a;letter-spacing:0.35px;-webkit-text-stroke:0.25px currentColor">100</div>
<div class="t" style="right:867.0px;top:941.5px;font-size:31px;color:#4a4a4a;letter-spacing:1.0px;-webkit-text-stroke:0.6px #4a4a4a">Flash</div>
<div class="t" style="left:1556.0px;top:941.5px;font-size:31px;color:#1a1a1a;letter-spacing:0.35px;-webkit-text-stroke:0.25px currentColor">No</div>
<div class="t" style="right:867.0px;top:984.2px;font-size:31px;color:#4a4a4a;letter-spacing:1.0px;-webkit-text-stroke:0.6px #4a4a4a">Rapporto focale</div>
<div class="t" style="left:1556.0px;top:984.2px;font-size:31px;color:#1a1a1a;letter-spacing:0.35px;-webkit-text-stroke:0.25px currentColor">f/8</div>
<div class="t" style="right:867.0px;top:1027.0px;font-size:31px;color:#4a4a4a;letter-spacing:1.0px;-webkit-text-stroke:0.6px #4a4a4a">Modalità misurazione</div>
<div class="t" style="left:1556.0px;top:1027.0px;font-size:31px;color:#1a1a1a;letter-spacing:0.35px;-webkit-text-stroke:0.25px currentColor">Schema</div>
<div class="t" style="right:867.0px;top:1069.7px;font-size:31px;color:#4a4a4a;letter-spacing:1.0px;-webkit-text-stroke:0.6px #4a4a4a">Bilanciamento bianco</div>
<div class="t" style="left:1556.0px;top:1069.7px;font-size:31px;color:#1a1a1a;letter-spacing:0.35px;-webkit-text-stroke:0.25px currentColor">0</div>
<div class="t" style="right:867.0px;top:1112.5px;font-size:31px;color:#4a4a4a;letter-spacing:1.0px;-webkit-text-stroke:0.6px #4a4a4a">Autore del contenuto</div>
<div class="t" style="left:1556.0px;top:1112.5px;font-size:31px;color:#1a1a1a;letter-spacing:0.35px;-webkit-text-stroke:0.25px currentColor">Adobe Bridge CS6 (Macintosh)</div>
<div class="t" style="right:867.0px;top:1155.2px;font-size:31px;color:#4a4a4a;letter-spacing:1.0px;-webkit-text-stroke:0.6px #4a4a4a">Longitudine</div>
<div class="t" style="left:1556.0px;top:1155.2px;font-size:31px;color:#1a1a1a;letter-spacing:0.35px;-webkit-text-stroke:0.25px currentColor">8° 22' 23,004" E</div>
<div class="t" style="right:867.0px;top:1198.0px;font-size:31px;color:#4a4a4a;letter-spacing:1.0px;-webkit-text-stroke:0.6px #4a4a4a">Latitudine</div>
<div class="t" style="left:1556.0px;top:1198.0px;font-size:31px;color:#1a1a1a;letter-spacing:0.35px;-webkit-text-stroke:0.25px currentColor">45° 47' 18,504" N</div>
<div class="t" style="left:1556.0px;top:1243.9px;font-size:34px;color:#1b6fd2;letter-spacing:0.4px;-webkit-text-stroke:0.3px #1b6fd2">Nascondi dettagli</div>
<div class="a" style="left:996px;top:1300px;width:1225px;height:2px;background:#d2d2d2"></div>
<svg class="a" style="left:0;top:0" width="2400" height="1500" viewBox="0 0 2400 1500"><rect x="1401.2" y="1359.7" width="22.5" height="17.8" rx="2" fill="none" stroke="#383838" stroke-width="2"/><path d="M1417 1347.2 Q1433.5 1348.5 1434 1367.5" fill="none" stroke="#383838" stroke-width="2" stroke-linecap="round"/><path d="M1406.5 1347 L1418 1341 V1353 Z" fill="#383838"/><circle cx="1609" cy="1361" r="19.2" fill="none" stroke="#383838" stroke-width="2.1"/><path d="M1609 1350.5 L1613.6 1363 H1604.4 Z" fill="#383838"/><path d="M1604.4 1363 Q1600.5 1370 1600.3 1378.5 M1613.6 1363 Q1617.5 1370 1617.7 1378.5" fill="none" stroke="#383838" stroke-width="2.1"/><circle cx="1800" cy="1361" r="19.2" fill="none" stroke="#383838" stroke-width="2.1"/><circle cx="1789.9" cy="1360.7" r="2.1" fill="#383838"/><circle cx="1800" cy="1360.7" r="2.1" fill="#383838"/><circle cx="1810.1" cy="1360.7" r="2.1" fill="#383838"/></svg>
<div class="t" style="left:917.0px;width:1000px;text-align:center;top:1398.9px;font-size:29px;color:#8e8e8e;letter-spacing:0.5px;">Ruota</div>
<div class="t" style="left:917.0px;width:1000px;text-align:center;top:1433.8px;font-size:29px;color:#8e8e8e;letter-spacing:0.5px;">a sinistra</div>
<div class="t" style="left:1108.0px;width:1000px;text-align:center;top:1398.9px;font-size:29px;color:#8e8e8e;letter-spacing:0.5px;">Modifica</div>
<div class="t" style="left:1300.0px;width:1000px;text-align:center;top:1398.9px;font-size:29px;color:#8e8e8e;letter-spacing:0.5px;">Altro…</div>
<div id="sb"></div>
<div class="t" style="left:700.5px;width:1000px;text-align:center;top:1534.1px;font-size:30px;color:#3c3c3c;letter-spacing:0.1px;">1 di 2 selezionati, 19,36 GB disponibili</div>
</div></div>
</body></html>
